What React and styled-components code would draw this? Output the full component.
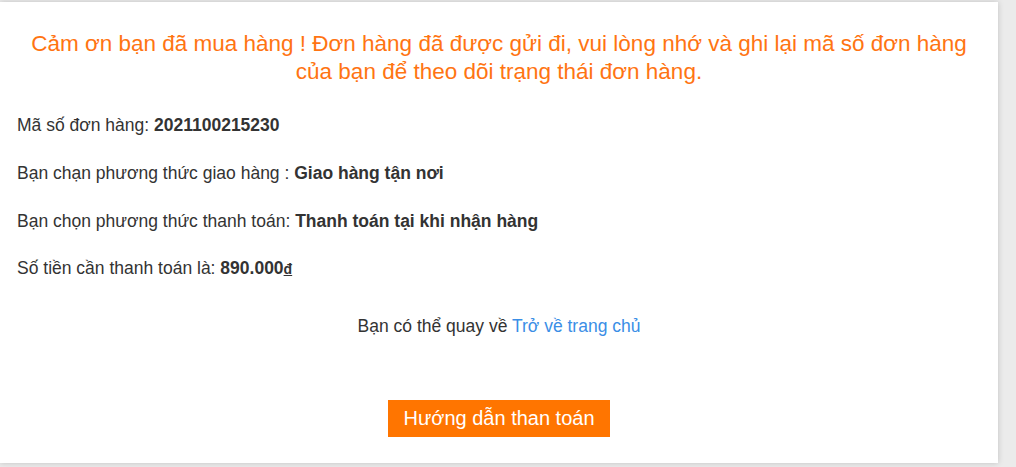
import styled, { createGlobalStyle } from 'styled-components';

const GlobalStyle = createGlobalStyle`
  body {
    margin: 0;
    background: #ebebeb;
    font-family: "Liberation Sans", Arial, sans-serif;
  }
`;

function App() {
  return (
    <>
      <GlobalStyle />
      <Page>
        <Card>
          <Title>
            Cảm ơn bạn đã mua hàng ! Đơn hàng đã được gửi đi, vui lòng nhớ và ghi lại mã số đơn hàng
            <br />
            của bạn để theo dõi trạng thái đơn hàng.
          </Title>
          <Info>
            Mã số đơn hàng: <b>2021100215230</b>
          </Info>
          <Info>
            Bạn chạn phương thức giao hàng : <b>Giao hàng tận nơi</b>
          </Info>
          <Info>
            Bạn chọn phương thức thanh toán: <b>Thanh toán tại khi nhận hàng</b>
          </Info>
          <Info>
            Số tiền cần thanh toán là: <b>890.000<u>đ</u></b>
          </Info>
          <Back>
            Bạn có thể quay về <a href="#">Trở về trang chủ</a>
          </Back>
          <Actions>
            <GuideBtn>Hướng dẫn than toán</GuideBtn>
          </Actions>
        </Card>
      </Page>
    </>
  );
}

export default App;

const Page = styled.div`
  padding: 2px 18px 4px 0;
  height: 467px;
  box-sizing: border-box;
  overflow: hidden;
`;

const Card = styled.div`
  width: 998px;
  height: 461px;
  box-sizing: border-box;
  background: #fff;
  box-shadow: 0 0 6px rgba(0, 0, 0, 0.18);
  padding: 28px 17px 0;
  color: #333;
  display: flow-root;
`;

const Title = styled.h2`
  margin: 0 0 27px;
  font-size: 22.5px;
  font-weight: normal;
  line-height: 28px;
  text-align: center;
  color: #ff7412;
`;

const Info = styled.p`
  margin: 0 0 23.8px;
  font-size: 17.5px;
  line-height: 24px;

  b {
    font-weight: bold;
  }
  u {
    text-decoration: underline;
    font-size: 14px;
  }
`;

const Back = styled.p`
  margin: 33px 0 0;
  font-size: 17.5px;
  line-height: 24px;
  text-align: center;

  a {
    color: #3a8ee6;
    text-decoration: none;
  }
`;

const Actions = styled.div`
  display: flex;
  justify-content: center;
  margin-top: 62px;
`;

const GuideBtn = styled.button`
  width: 222px;
  height: 37px;
  border: none;
  background: #ff7500;
  color: #fff;
  font-family: "Liberation Sans", Arial, sans-serif;
  font-size: 20px;
  padding: 0;
  cursor: pointer;
`;
